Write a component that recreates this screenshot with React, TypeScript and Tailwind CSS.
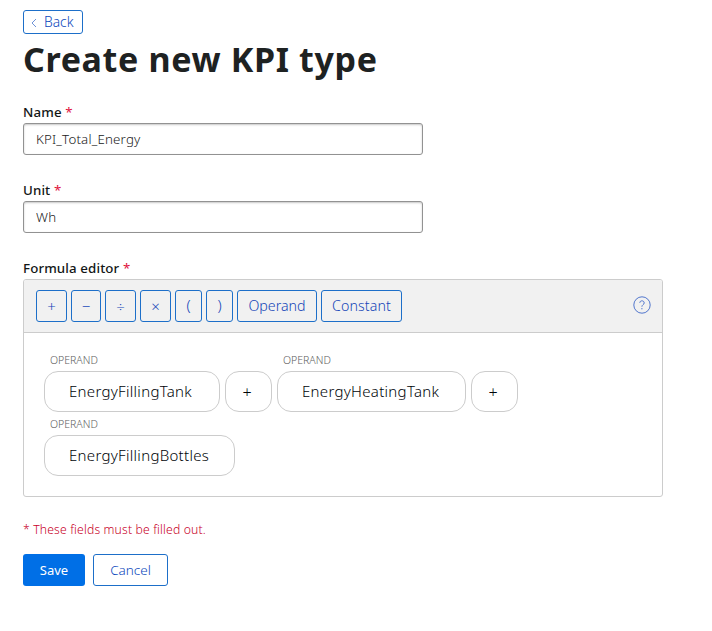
import type { ReactNode } from "react";

function Label({ children }: { children: ReactNode }) {
  return (
    <label className="block h-[22px] whitespace-nowrap text-[13.3px] leading-[22px] font-medium tracking-[0.12px] text-[#121616]">
      {children} <span className="font-normal text-[#e0103c]">*</span>
    </label>
  );
}

function Field({ label, value }: { label: string; value: string }) {
  return (
    <div className="mb-6 flex flex-col">
      <Label>{label}</Label>
      <input
        readOnly
        value={value}
        className="h-8 w-[400px] rounded-[3px] border border-[#929292] bg-white px-3 pb-px text-[13.3px] font-light tracking-[0.18px] text-[#202020] shadow-[inset_0_1px_2px_rgba(0,0,0,0.22)] outline-none"
      />
    </div>
  );
}

const tools = [
  { text: "+", width: "w-[31px]", size: "text-[15px]" },
  { text: "−", width: "w-[30px]", size: "text-[15px]" },
  { text: "÷", width: "w-[31px]", size: "text-[15px]" },
  { text: "×", width: "w-[31px]", size: "text-[15px]" },
  { text: "(", width: "w-[27px]", size: "pb-px text-[15px]" },
  { text: ")", width: "w-[27px]", size: "pb-px text-[15px]" },
  { text: "Operand", width: "w-20", size: "pb-px text-[14.2px]" },
  { text: "Constant", width: "w-[81px]", size: "pb-px text-[14.2px] tracking-[0.1px]" },
];

function Token({ text, width, operand }: { text: string; width: string; operand?: boolean }) {
  return (
    <div className="flex h-16 flex-col">
      <div className="h-[23px] pt-px pl-1.5 text-[10.5px] leading-[23px] font-light text-[#606060]">
        {operand ? "OPERAND" : ""}
      </div>
      <div
        className={`flex h-[41px] items-center rounded-[14px] border border-[#cccccc] bg-white font-light text-[#000408] ${width} ${operand ? "pl-6 text-[15px] tracking-[0.3px]" : "justify-center pt-px pr-[3px] text-[16px]"}`}
      >
        {text}
      </div>
    </div>
  );
}

export default function App() {
  return (
    <main className="h-[631px] w-[712px] overflow-hidden bg-white pt-2.5 pl-[23px] font-['Noto_Sans',sans-serif]">
      <button className="flex h-6 w-[60px] items-center rounded-[3px] border border-[#1d6fc9] pl-[7px] text-[13.8px] font-light text-[#0c48bc]">
        <svg className="mt-0.5 mr-[7px] h-2.5 w-1.5" viewBox="0 0 6 10" fill="none" stroke="currentColor" strokeWidth="0.6">
          <path d="M5 1 1 5l4 4" />
        </svg>
        Back
      </button>
      <h1 className="h-[67px] whitespace-nowrap text-[34px] leading-[50px] font-bold tracking-[0.65px] text-[#1e2222]">Create new KPI type</h1>
      <Field label="Name" value="KPI_Total_Energy" />
      <Field label="Unit" value="Wh" />
      <Label>Formula editor</Label>
      <section className="h-[218px] w-[640px] rounded-[3px] border border-[#cccccc]">
        <div className="flex h-[53px] items-center justify-between rounded-t-[2px] border-b border-[#cccccc] bg-[#f1f1f1] pr-[11px] pl-3">
          <div className="flex gap-1">
            {tools.map((tool) => (
              <button
                key={tool.text}
                className={`flex h-8 items-center justify-center rounded-[3px] border border-[#1d6fc9] font-light text-[#1445b8] ${tool.width} ${tool.size}`}
              >
                {tool.text}
              </button>
            ))}
          </div>
          <svg className="mb-0.5 h-[18px] w-[18px] text-[#4169c8]" viewBox="0 0 18 18" fill="none" stroke="currentColor" strokeWidth="0.9">
            <circle cx="9" cy="9" r="8.2" />
            <path d="M6.8 6.8c0-2.7 4.4-2.6 4.4.1 0 1.8-2.3 1.8-2.3 3.8M8.9 12v1.3" />
          </svg>
        </div>
        <div className="flex flex-wrap gap-x-[5px] pt-[15px] pl-5">
          <Token text="EnergyFillingTank" width="w-44" operand />
          <Token text="+" width="w-[47px]" />
          <Token text="EnergyHeatingTank" width="w-[189px]" operand />
          <Token text="+" width="w-[47px]" />
          <Token text="EnergyFillingBottles" width="w-[191px]" operand />
        </div>
      </section>
      <p className="mt-[23px] h-5 text-[12.2px] leading-5 font-light tracking-[0.15px] text-[#c80028]">* These fields must be filled out.</p>
      <div className="mt-[14px] flex gap-2">
        <button className="h-8 w-[62px] rounded-[3px] bg-[#006fe6] pt-px text-[13px] text-white">Save</button>
        <button className="h-8 w-[75px] rounded-[3px] border border-[#1d6fc9] pt-px text-[13.5px] font-light text-[#0c48bc]">Cancel</button>
      </div>
    </main>
  );
}
